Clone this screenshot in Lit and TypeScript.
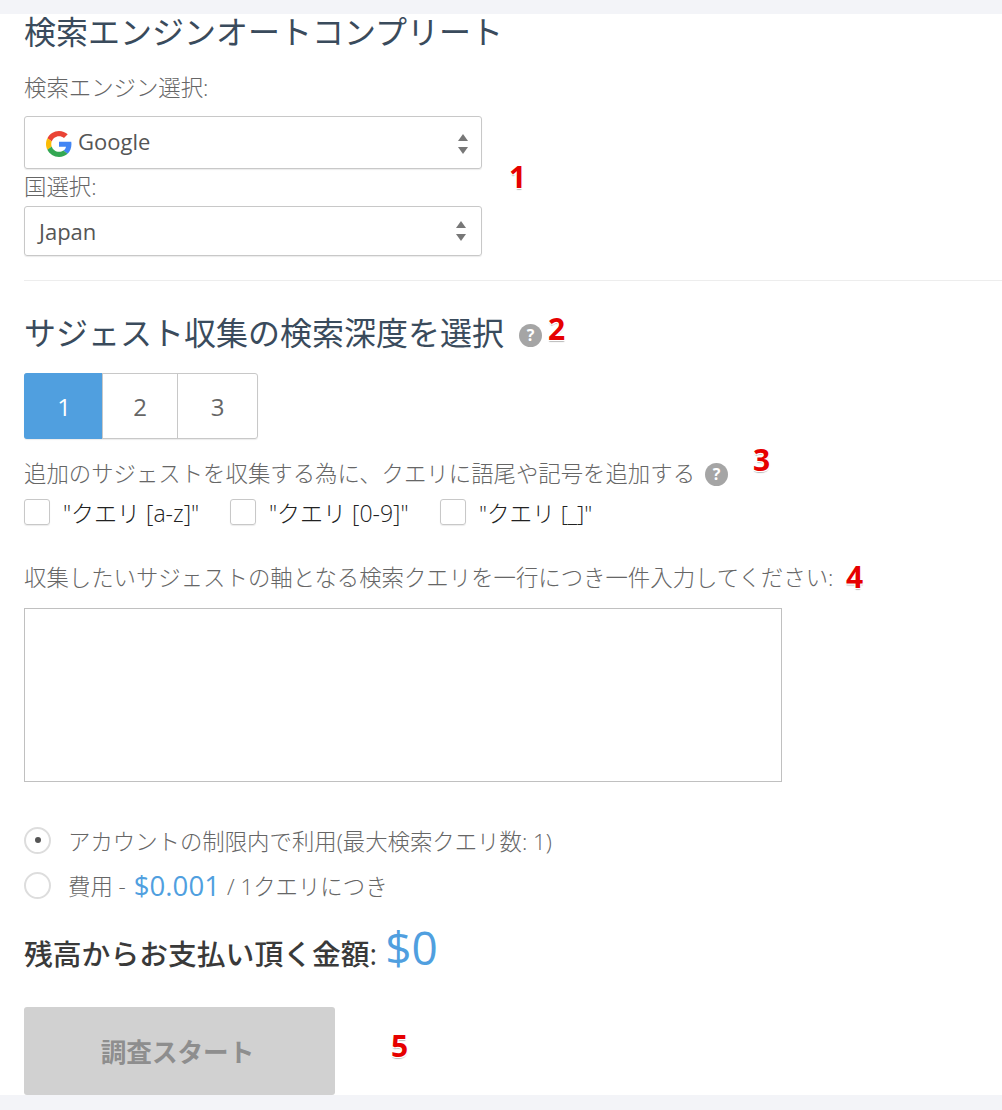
import { LitElement, html, css } from "lit";
import { customElement } from "lit/decorators.js";

const updown = html`<svg class="updown" viewBox="0 0 12 20" aria-hidden="true"><path d="M6 0 L11 7 H1 Z" fill="#777"/><path d="M6 20 L1 13 H11 Z" fill="#777"/></svg>`;
const help = html`<span class="help">?</span>`;

@customElement("app-root")
export class AppRoot extends LitElement {
  static styles = css`
    :host { display: block; width: 1002px; height: 1110px; overflow: hidden; background: #f3f4f8; box-sizing: border-box; padding: 14px 0 15px; position: relative;
      font-family: "Open Sans", "Noto Sans CJK JP", sans-serif; color: #777; }
    * { box-sizing: border-box; }
    .panel { background: #fff; height: 1081px; padding-left: 24px; display: flex; flex-direction: column; align-items: flex-start; }
    .panel > * { flex: none; }
    h2 { margin: 0; font-weight: 400; font-size: 32px; line-height: 36px; color: #3a4b5c; white-space: nowrap; }
    .label { font-size: 22.4px; font-weight: 300; line-height: 30px; color: #666; white-space: nowrap; }
    .l1 { margin-top: 23px; }
    .l2 { margin-top: 3px; }
    .select { width: 458px; border: 1px solid #c8c8c8; border-radius: 3px; box-shadow: 0 1px 1px rgba(0,0,0,.08); display: flex; align-items: center; font-size: 22px; color: #555; position: relative; }
    .s1 { height: 53px; padding-left: 21px; gap: 6px; margin-top: 13px; }
    .s1 span { margin-bottom: 3px; }
    .s2 { height: 50px; padding-left: 14px; margin-top: 4px; }
    .updown { width: 12px; height: 20px; position: absolute; right: 12px; top: 50%; margin-top: -9px; }
    .s2 .updown { right: 14px; margin-top: -10px; }
    .glogo { width: 26px; height: 26px; margin-top: 3px; }
    .rule { align-self: stretch; height: 1px; background: #ededed; margin-top: 24px; }
    .help { display: inline-flex; width: 23px; height: 23px; border-radius: 50%; background: #a5a5a5; color: #fff; font-size: 16px; font-weight: 700; align-items: center; justify-content: center; line-height: 1; }
    .h2row { display: flex; align-items: center; gap: 15px; margin-top: 34px; }
    .h2row .help { margin-top: 4px; }
    .group { display: flex; height: 66px; margin-top: 22px; border: 1px solid #c8c8c8; border-radius: 3px; box-shadow: 0 1px 1px rgba(0,0,0,.08); }
    .group span { display: flex; align-items: center; justify-content: center; width: 80px; font-size: 24px; font-weight: 500; color: #666; }
    .group span + span { border-left: 1px solid #c8c8c8; }
    .group span:nth-child(2) { width: 75px; }
    .group span.on { background: #509fdf; color: #fff; margin: -1px 0 -1px -1px; width: 78px; padding-left: 2px; border-radius: 3px 0 0 3px; }
    .lrow { display: flex; align-items: center; gap: 10px; margin-top: 20px; height: 30px; }
    .checks { display: flex; margin-top: 8px; height: 30px; align-items: center; }
    .cb { width: 26px; height: 26px; border: 1px solid #c8c8c8; border-radius: 3px; box-shadow: 0 1px 1px rgba(0,0,0,.08); flex: none; }
    .checks label { font-size: 23px; font-weight: 300; color: #222; margin-left: 13px; white-space: nowrap; }
    .w1 { width: 206px; display: flex; align-items: center; }
    .w2 { width: 210px; display: flex; align-items: center; }
    .w3 { display: flex; align-items: center; }
    .w3 label { font-size: 22.6px; }
    .l4 { margin-top: 36px; }
    .ta { width: 758px; height: 174px; border: 1px solid #c0c0c0; margin-top: 15px; }
    .radio { display: flex; align-items: center; height: 30px; font-size: 22.4px; font-weight: 300; color: #666; white-space: nowrap; }
    .r1 { margin-top: 43px; }
    .r2 { margin-top: 15px; }
    .rd { width: 27px; height: 27px; border-radius: 50%; border: 2px solid #ddd; margin-right: 17px; display: flex; align-items: center; justify-content: center; flex: none; }
    .rd i { width: 6px; height: 6px; background: #555; border-radius: 50%; }
    .price { color: #509fdf; font-size: 27.6px; font-weight: 500; margin: 0 7px 0 8px; }
    .total { margin-top: 16px; display: flex; align-items: baseline; font-size: 28.8px; font-weight: 500; color: #3a3a3a; height: 56px; white-space: nowrap; }
    .total b { color: #509fdf; font-weight: 500; font-size: 46px; margin-left: 8px; }
    .btn { margin-top: 35px; width: 311px; height: 88px; background: #d1d1d1; border-radius: 3px; color: #8e8e8e; font-size: 25.6px; font-weight: 700; display: flex; align-items: center; justify-content: center; padding-right: 4px; }
    .n { position: absolute; color: #e60000; font-family: "Open Sans", sans-serif; font-weight: 700; font-size: 30px; line-height: 30px; text-shadow: 1px 1px 0 #fff, -1px 1px 0 #fff, 1px -1px 0 #fff, -1px -1px 0 #fff, 0 2px 1px #bbb; }
  `;

  render() {
    return html`
      <div class="panel">
        <h2>検索エンジンオートコンプリート</h2>
        <div class="label l1">検索エンジン選択:</div>
        <div class="select s1">
          <svg class="glogo" viewBox="0 0 48 48" aria-hidden="true">
            <path fill="#EA4335" d="M24 9.500c3.500 0 6.700 1.200 9.200 3.600l6.900-6.900C35.900 2.400 30.500 0 24 0 14.600 0 6.500 5.400 2.600 13.200l8 6.200C12.400 13.700 17.700 9.500 24 9.500z"/>
            <path fill="#4285F4" d="M47 24.500c0-1.600-.1-3.100-.4-4.500H24v9h12.900c-.6 3-2.200 5.500-4.800 7.200l7.700 6c4.500-4.200 7.200-10.300 7.200-17.700z"/>
            <path fill="#FBBC05" d="M10.500 28.600c-.5-1.500-.8-3-.8-4.600s.3-3.100.8-4.600l-8-6.200C.9 16.400 0 20.100 0 24s.9 7.600 2.600 10.800z"/>
            <path fill="#34A853" d="M24 48c6.500 0 11.900-2.100 15.900-5.800l-7.700-6c-2.200 1.500-4.900 2.300-8.200 2.300-6.300 0-11.600-4.200-13.500-9.900l-8 6.200C6.500 42.600 14.600 48 24 48z"/>
          </svg>
          <span>Google</span>${updown}
        </div>
        <div class="label l2">国選択:</div>
        <div class="select s2"><span>Japan</span>${updown}</div>
        <div class="rule"></div>
        <div class="h2row"><h2>サジェスト収集の検索深度を選択</h2>${help}</div>
        <div class="group"><span class="on">1</span><span>2</span><span>3</span></div>
        <div class="lrow"><span class="label">追加のサジェストを収集する為に、クエリに語尾や記号を追加する</span>${help}</div>
        <div class="checks">
          <div class="w1"><span class="cb"></span><label>"クエリ [a-z]"</label></div>
          <div class="w2"><span class="cb"></span><label>"クエリ [0-9]"</label></div>
          <div class="w3"><span class="cb"></span><label>"クエリ [_]"</label></div>
        </div>
        <div class="label l4">収集したいサジェストの軸となる検索クエリを一行につき一件入力してください:</div>
        <div class="ta"></div>
        <div class="radio r1"><span class="rd"><i></i></span>アカウントの制限内で利用(最大検索クエリ数: 1)</div>
        <div class="radio r2"><span class="rd"></span>費用 - <span class="price">$0.001</span>/ 1クエリにつき</div>
        <div class="total">残高からお支払い頂く金額: <b>$0</b></div>
        <div class="btn">調査スタート</div>
      </div>
      <span class="n" style="left:509px;top:162px">1</span>
      <span class="n" style="left:548px;top:314px">2</span>
      <span class="n" style="left:753px;top:445px">3</span>
      <span class="n" style="left:846px;top:562px">4</span>
      <span class="n" style="left:391px;top:1031px">5</span>
    `;
  }
}
